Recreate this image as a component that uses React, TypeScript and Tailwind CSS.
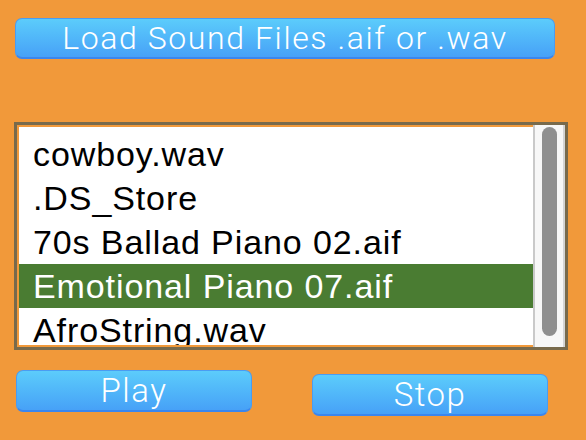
import React from "react";

const files = [
  "cowboy.wav",
  ".DS_Store",
  "70s Ballad Piano 02.aif",
  "Emotional Piano 07.aif",
  "AfroString.wav",
];

const selected = 3;

function BlueButton({ label, className }: { label: string; className: string }) {
  return (
    <button
      className={
        "flex items-center justify-center rounded-[7px] border border-[#4a9cf2] border-b-2 border-b-[#3b86ee] bg-gradient-to-b from-[#5cccfb] to-[#47a1f7] text-white font-light leading-none " +
        className
      }
      style={{ fontFamily: "Roboto, 'Liberation Sans', sans-serif" }}
    >
      {label}
    </button>
  );
}

export default function App() {
  return (
    <div className="h-[440px] w-[586px] overflow-hidden bg-[#f1993a]">
      <div className="pl-[15px] pt-[18px]">
        <BlueButton label="Load Sound Files .aif or .wav" className="h-[41px] w-[540px] text-[32px] tracking-[1.6px]" />
      </div>

      <div className="ml-[14px] mt-[63px] flex h-[228px] w-[554px] border-[3px] border-[#786a4c]">
        <div className="flex-1 bg-[#f1993a] p-[2px] pr-0">
          <ul
            className="h-full overflow-hidden bg-white pt-[5px]"
            style={{ fontFamily: "'Liberation Sans', Arial, sans-serif" }}
          >
            {files.map((f, i) => (
              <li
                key={f}
                className={
                  "h-[44px] pl-[14px] text-[34px] leading-[44px] tracking-[0.9px] " +
                  (i === selected ? "bg-[#4a7c32] text-white" : "text-black")
                }
              >
                {f}
              </li>
            ))}
          </ul>
        </div>
        <div className="flex w-[32px] justify-center border-x-2 border-l-[#c9c9c9] border-r-[#d4d4d4] bg-[#f7f7f7] pt-[2px]">
          <div className="h-[209px] w-[15px] rounded-full bg-[#8f8f8f]" />
        </div>
      </div>

      <div className="flex items-start pl-[16px] pt-[20px]">
        <BlueButton label="Play" className="h-[42px] w-[236px] text-[33px] tracking-[1.5px]" />
        <BlueButton label="Stop" className="ml-[60px] mt-[4px] h-[42px] w-[236px] text-[33px] tracking-[1.5px]" />
      </div>
    </div>
  );
}
